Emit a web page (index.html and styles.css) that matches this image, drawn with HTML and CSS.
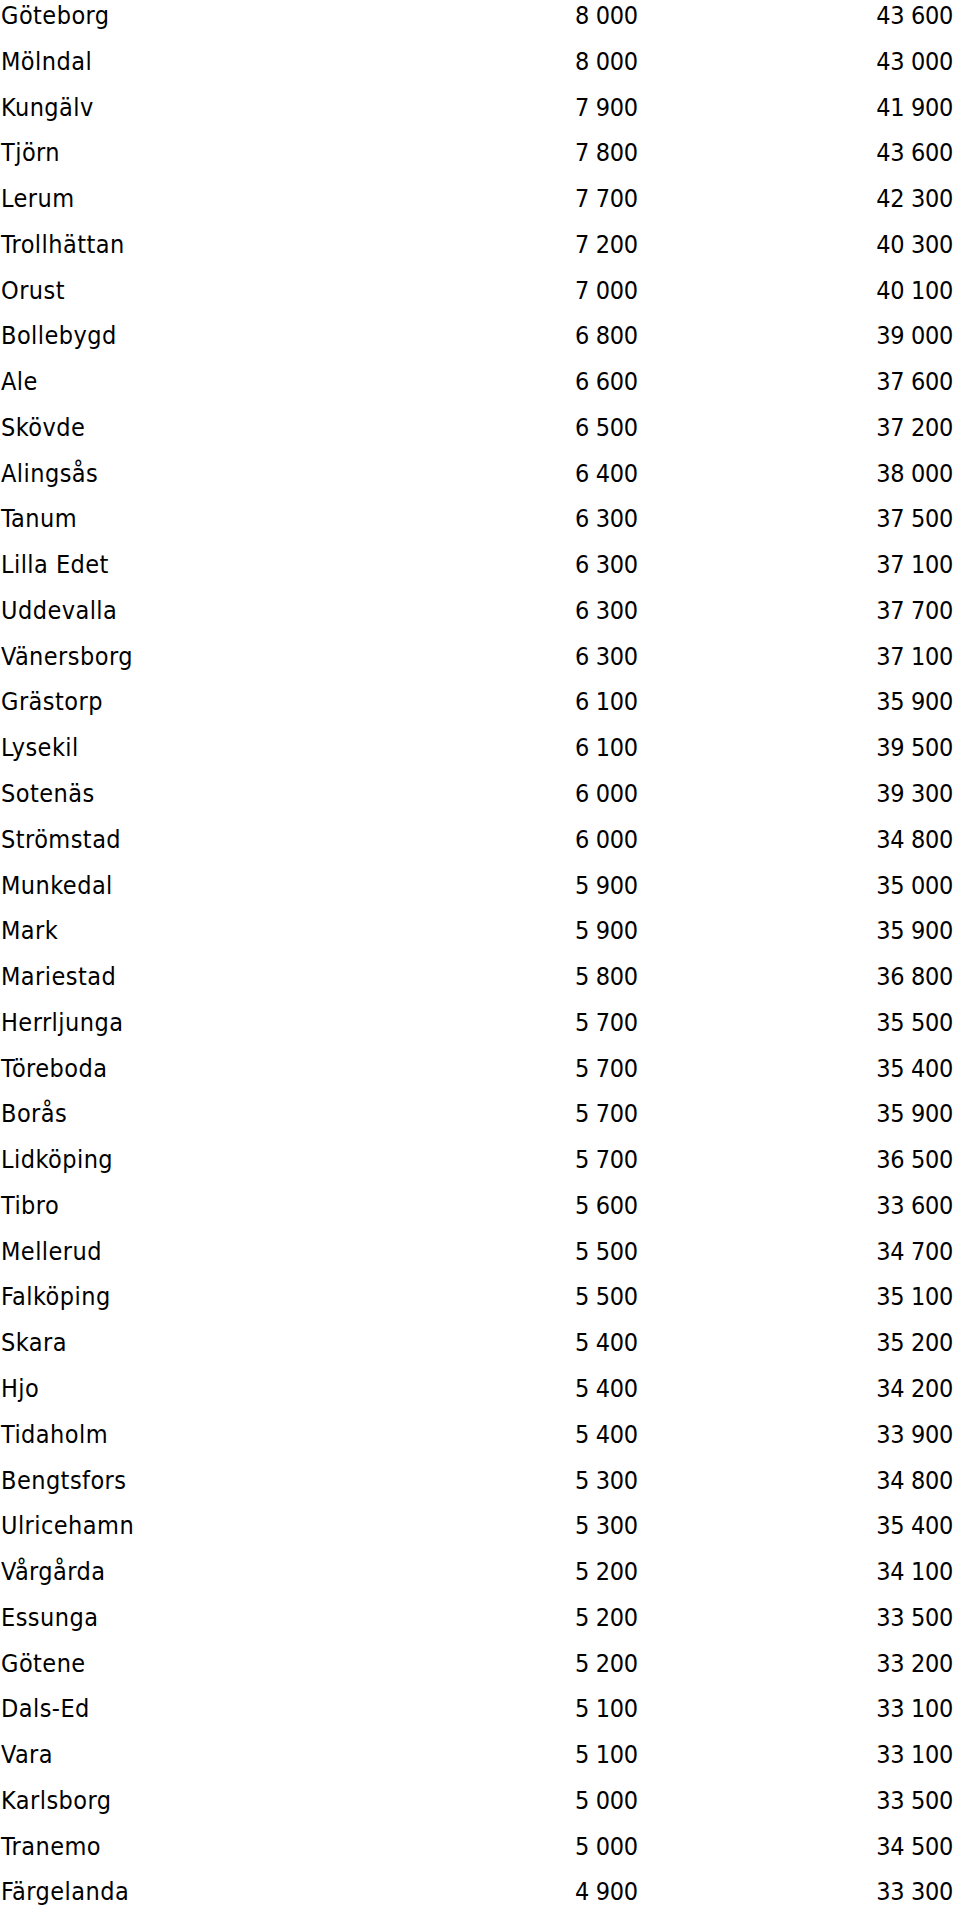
FILE: index.html
```html
<!DOCTYPE html>
<html lang="sv">
<head>
<meta charset="utf-8">
<title>Tabell</title>
<link rel="stylesheet" href="styles.css">
</head>
<body>
<div class="table">
<div class="row"><span class="name">Göteborg</span><span class="a">8 000</span><span class="b">43 600</span></div>
<div class="row"><span class="name">Mölndal</span><span class="a">8 000</span><span class="b">43 000</span></div>
<div class="row"><span class="name">Kungälv</span><span class="a">7 900</span><span class="b">41 900</span></div>
<div class="row"><span class="name">Tjörn</span><span class="a">7 800</span><span class="b">43 600</span></div>
<div class="row"><span class="name">Lerum</span><span class="a">7 700</span><span class="b">42 300</span></div>
<div class="row"><span class="name">Trollhättan</span><span class="a">7 200</span><span class="b">40 300</span></div>
<div class="row"><span class="name">Orust</span><span class="a">7 000</span><span class="b">40 100</span></div>
<div class="row"><span class="name">Bollebygd</span><span class="a">6 800</span><span class="b">39 000</span></div>
<div class="row"><span class="name">Ale</span><span class="a">6 600</span><span class="b">37 600</span></div>
<div class="row"><span class="name">Skövde</span><span class="a">6 500</span><span class="b">37 200</span></div>
<div class="row"><span class="name">Alingsås</span><span class="a">6 400</span><span class="b">38 000</span></div>
<div class="row"><span class="name">Tanum</span><span class="a">6 300</span><span class="b">37 500</span></div>
<div class="row"><span class="name">Lilla Edet</span><span class="a">6 300</span><span class="b">37 100</span></div>
<div class="row"><span class="name">Uddevalla</span><span class="a">6 300</span><span class="b">37 700</span></div>
<div class="row"><span class="name">Vänersborg</span><span class="a">6 300</span><span class="b">37 100</span></div>
<div class="row"><span class="name">Grästorp</span><span class="a">6 100</span><span class="b">35 900</span></div>
<div class="row"><span class="name">Lysekil</span><span class="a">6 100</span><span class="b">39 500</span></div>
<div class="row"><span class="name">Sotenäs</span><span class="a">6 000</span><span class="b">39 300</span></div>
<div class="row"><span class="name">Strömstad</span><span class="a">6 000</span><span class="b">34 800</span></div>
<div class="row"><span class="name">Munkedal</span><span class="a">5 900</span><span class="b">35 000</span></div>
<div class="row"><span class="name">Mark</span><span class="a">5 900</span><span class="b">35 900</span></div>
<div class="row"><span class="name">Mariestad</span><span class="a">5 800</span><span class="b">36 800</span></div>
<div class="row"><span class="name">Herrljunga</span><span class="a">5 700</span><span class="b">35 500</span></div>
<div class="row"><span class="name">Töreboda</span><span class="a">5 700</span><span class="b">35 400</span></div>
<div class="row"><span class="name">Borås</span><span class="a">5 700</span><span class="b">35 900</span></div>
<div class="row"><span class="name">Lidköping</span><span class="a">5 700</span><span class="b">36 500</span></div>
<div class="row"><span class="name">Tibro</span><span class="a">5 600</span><span class="b">33 600</span></div>
<div class="row"><span class="name">Mellerud</span><span class="a">5 500</span><span class="b">34 700</span></div>
<div class="row"><span class="name">Falköping</span><span class="a">5 500</span><span class="b">35 100</span></div>
<div class="row"><span class="name">Skara</span><span class="a">5 400</span><span class="b">35 200</span></div>
<div class="row"><span class="name">Hjo</span><span class="a">5 400</span><span class="b">34 200</span></div>
<div class="row"><span class="name">Tidaholm</span><span class="a">5 400</span><span class="b">33 900</span></div>
<div class="row"><span class="name">Bengtsfors</span><span class="a">5 300</span><span class="b">34 800</span></div>
<div class="row"><span class="name">Ulricehamn</span><span class="a">5 300</span><span class="b">35 400</span></div>
<div class="row"><span class="name">Vårgårda</span><span class="a">5 200</span><span class="b">34 100</span></div>
<div class="row"><span class="name">Essunga</span><span class="a">5 200</span><span class="b">33 500</span></div>
<div class="row"><span class="name">Götene</span><span class="a">5 200</span><span class="b">33 200</span></div>
<div class="row"><span class="name">Dals-Ed</span><span class="a">5 100</span><span class="b">33 100</span></div>
<div class="row"><span class="name">Vara</span><span class="a">5 100</span><span class="b">33 100</span></div>
<div class="row"><span class="name">Karlsborg</span><span class="a">5 000</span><span class="b">33 500</span></div>
<div class="row"><span class="name">Tranemo</span><span class="a">5 000</span><span class="b">34 500</span></div>
<div class="row"><span class="name">Färgelanda</span><span class="a">4 900</span><span class="b">33 300</span></div>
</div>
</body>
</html>
```
FILE: styles.css
```css
html, body {
  margin: 0;
  padding: 0;
  background: #ffffff;
}
body {
  font-family: "DejaVu Sans Condensed", "DejaVu Sans", sans-serif;
  font-size: 25px;
  line-height: 32px;
  color: #000000;
}
.table {
  display: flex;
  flex-direction: column;
  padding-left: 1px;
}
.row {
  display: grid;
  grid-template-columns: 574px 300px 1fr;
  height: 45.77px;
  align-items: start;
}
.a, .b, .name {
  white-space: nowrap;
}
.name {
  letter-spacing: 0.45px;
}
.a, .b {
  letter-spacing: -0.3px;
}
.b {
  text-align: right;
  padding-right: 7px;
}
```
